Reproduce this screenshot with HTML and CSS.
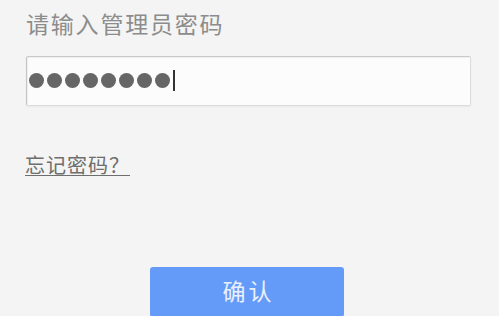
FILE: index.html
```html
<!DOCTYPE html>
<html lang="zh-CN">
<head>
<meta charset="utf-8">
<title>登录</title>
<link rel="stylesheet" href="styles.css">
</head>
<body>
<div class="page">
  <div class="label">请输入管理员密码</div>
  <div class="field">
    <span class="dot"></span><span class="dot"></span><span class="dot"></span><span class="dot"></span><span class="dot"></span><span class="dot"></span><span class="dot"></span><span class="dot"></span><span class="caret"></span>
  </div>
  <a class="forgot" href="#">忘记密码？</a>
  <button class="confirm" type="button">确认</button>
</div>
</body>
</html>
```
FILE: styles.css
```css
html, body {
  margin: 0;
  padding: 0;
  background: #f4f4f4;
  overflow: hidden;
}
.page {
  width: 445px;
  padding: 7px 0 0 26px;
  font-family: "Noto Sans CJK SC", "Noto Sans", sans-serif;
  display: flex;
  flex-direction: column;
  align-items: flex-start;
}
.label {
  font-size: 23px;
  line-height: 32px;
  color: #8c8c8c;
  letter-spacing: 1.8px;
}
.field {
  margin-top: 17px;
  box-sizing: border-box;
  width: 445px;
  height: 50px;
  background: #fcfcfc;
  border: 1px solid #dcdcdc;
  border-top-color: #c9c9c9;
  border-left-color: #c4c4c4;
  box-shadow: inset 1px 1px 1px rgba(0,0,0,0.06), 0 1px 2px rgba(0,0,0,0.05);
  border-radius: 2px;
  display: flex;
  align-items: center;
  padding: 0 0 1px 2px;
  gap: 3px;
}
.dot {
  width: 15px;
  height: 15px;
  border-radius: 50%;
  background: #666;
}
.caret {
  width: 2px;
  height: 21px;
  background: #333;
  margin-left: 0;
}
.forgot {
  margin-top: 45px;
  margin-left: -1px;
  font-size: 20px;
  line-height: 27px;
  color: #6e6e6e;
  letter-spacing: 1px;
  text-decoration: underline;
  text-underline-offset: 2px;
  padding-right: 7px;
  text-decoration-thickness: 1px;
}
.confirm {
  margin: 89px 0 0 124px;
  width: 194px;
  height: 50px;
  border: none;
  border-radius: 3px;
  background: #659bf8;
  color: #e9f0fd;
  font-family: "Noto Sans CJK SC", "Noto Sans", sans-serif;
  font-size: 23px;
  line-height: 46px;
  padding: 0 0 4px 0;
  letter-spacing: 3px;
  text-indent: 3px;
}
```
